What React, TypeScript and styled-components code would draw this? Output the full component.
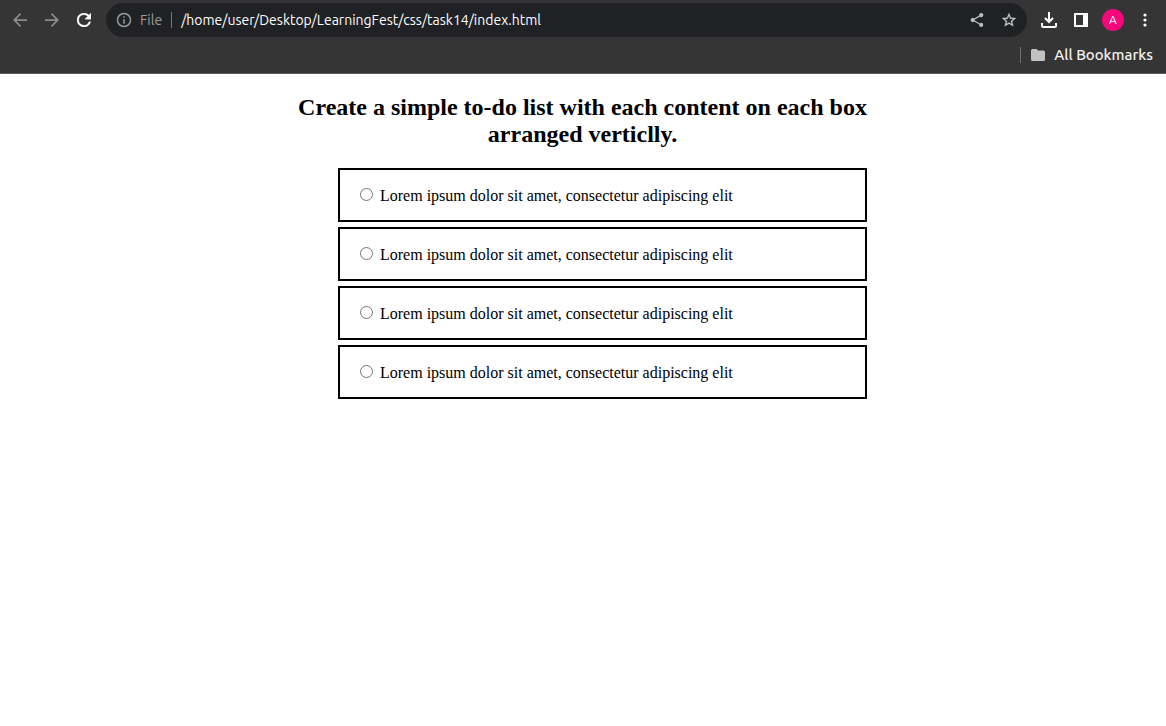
import React from "react";
import styled, { createGlobalStyle } from "styled-components";

const GlobalStyle = createGlobalStyle`
  * { box-sizing: border-box; }
  body {
    margin: 0;
    background: #fff;
    color: #000;
    font-family: "Liberation Serif", "Times New Roman", serif;
    font-size: 16px;
  }
`;

const Chrome = styled.header`
  background: #353535;
  border-bottom: 1px solid #5c5c5c;
  font-family: Ubuntu, "Noto Sans", sans-serif;
  font-size: 14px;
  color: #fff;
`;

const Toolbar = styled.div`
  display: flex;
  align-items: center;
  height: 40px;
  padding: 0 5px 0 4px;
`;

const IconButton = styled.button<{ $color?: string }>`
  display: flex;
  flex: none;
  align-items: center;
  justify-content: center;
  width: 32px;
  height: 32px;
  padding: 0;
  border: 0;
  background: none;
  color: ${({ $color }) => $color ?? "#fff"};
`;

const AddressBar = styled.div`
  display: flex;
  flex: 1;
  align-items: center;
  min-width: 0;
  height: 34px;
  margin: 0 6px;
  padding: 0 2px 0 10px;
  border-radius: 17px;
  background: #202124;
`;

const SiteInfo = styled.button`
  display: flex;
  align-items: center;
  gap: 8px;
  height: 16px;
  padding: 0 9px 0 0;
  border: 0;
  border-right: 1px solid #77787a;
  background: none;
  color: #9a9b9d;
  font: inherit;
`;

const Url = styled.input`
  flex: 1;
  min-width: 0;
  height: 24px;
  padding: 0 9px;
  border: 0;
  outline: 0;
  background: none;
  color: #fff;
  font: inherit;
`;

const Avatar = styled.span`
  width: 22px;
  height: 22px;
  border-radius: 50%;
  background: #f8067c;
  font-family: Ubuntu, "Noto Sans", sans-serif;
  font-size: 12px;
  line-height: 22px;
  text-align: center;
`;

const BookmarksBar = styled.div`
  display: flex;
  align-items: center;
  justify-content: flex-end;
  height: 33px;
  padding: 0 13px 4px 0;
`;

const BookmarksButton = styled.button`
  display: flex;
  align-items: center;
  gap: 9px;
  height: 16px;
  padding: 0 0 0 10px;
  border: 0;
  border-left: 1px solid #6f6f6f;
  background: none;
  color: #f1f1f1;
  font: inherit;
  font-size: 15px;
  font-weight: 500;
`;

const Main = styled.main`
  width: 100%;
  max-width: 570px;
  margin: 0 auto;
  padding-right: 1px;
`;

const Title = styled.h2`
  margin: 20px 0;
  font-size: 24px;
  line-height: 27px;
  text-align: center;
`;

const TodoList = styled.ul`
  display: flex;
  flex-direction: column;
  gap: 5px;
  margin: 0;
  padding: 0 0 0 40px;
  list-style: none;
`;

const TodoItem = styled.li`
  padding: 17px 20px 15px;
  border: 2px solid #000;
`;

const TodoLabel = styled.label`
  display: flex;
  align-items: center;
  gap: 7px;
  line-height: 18px;
`;

const Radio = styled.input`
  width: 13px;
  height: 13px;
  margin: 0 0 4px;
`;

const Icon = ({ d, box, w, h = w }: { d: string; box: string; w: number; h?: number }) => (
  <svg width={w} height={h} viewBox={box} fill="currentColor" aria-hidden="true">
    <path d={d} />
  </svg>
);

const paths = {
  back: "M20 11H7.83l5.59-5.59L12 4l-8 8 8 8 1.41-1.41L7.83 13H20v-2z",
  forward: "M12 4l-1.41 1.41L16.17 11H4v2h12.17l-5.58 5.59L12 20l8-8z",
  reload:
    "M17.65 6.35A7.96 7.96 0 0 0 12 4a8 8 0 1 0 7.73 10h-2.08A6 6 0 1 1 12 6c1.66 0 3.14.69 4.22 1.78L13 11h7V4l-2.35 2.35z",
  info: "M11 7h2v2h-2zm0 4h2v6h-2zm1-9a10 10 0 1 0 0 20 10 10 0 0 0 0-20zm0 18a8 8 0 1 1 0-16 8 8 0 0 1 0 16z",
  share:
    "M18 16.08c-.76 0-1.44.3-1.96.77L8.91 12.7a3.3 3.3 0 0 0 0-1.4l7.05-4.11A3 3 0 1 0 15 5c0 .24.04.47.09.7L8.04 9.81a3 3 0 1 0 0 4.38l7.12 4.16c-.05.21-.08.43-.08.65a2.92 2.92 0 1 0 2.92-2.92z",
  star: "M22 9.24l-7.19-.62L12 2 9.19 8.63 2 9.24l5.46 4.73L5.82 21 12 17.27 18.18 21l-1.63-7.03L22 9.24zM12 15.4l-3.76 2.27 1-4.28-3.32-2.88 4.38-.38L12 6.1l1.71 4.04 4.38.38-3.32 2.88 1 4.28L12 15.4z",
  folder: "M10 4H4a2 2 0 0 0-2 2v12a2 2 0 0 0 2 2h16a2 2 0 0 0 2-2V8a2 2 0 0 0-2-2h-8l-2-2z",
};

const DownloadIcon = () => (
  <svg width="16" height="16" viewBox="0 0 16 16" fill="none" stroke="currentColor" strokeWidth="2" aria-hidden="true">
    <path d="M8 0v10M4 6l4 4 4-4M1 11v3q0 1 1 1h12q1 0 1-1v-3" />
  </svg>
);

const SidePanelIcon = () => (
  <svg width="14" height="14" viewBox="0 0 14 14" fill="currentColor" aria-hidden="true">
    <path fillRule="evenodd" d="M0 0h14v14H0zM2 2v10h7V2z" />
  </svg>
);

const MenuIcon = () => (
  <svg width="4" height="14" viewBox="0 0 4 14" fill="currentColor" aria-hidden="true">
    <circle cx="2" cy="2" r="1.6" />
    <circle cx="2" cy="7" r="1.6" />
    <circle cx="2" cy="12" r="1.6" />
  </svg>
);

const todos = Array.from({ length: 4 }, () => "Lorem ipsum dolor sit amet, consectetur adipiscing elit");

export default function App() {
  return (
    <>
      <GlobalStyle />
      <Chrome>
        <Toolbar>
          <IconButton $color="#8b8b8b" aria-label="Back">
            <Icon d={paths.back} box="4 4 16 16" w={14} />
          </IconButton>
          <IconButton $color="#8b8b8b" aria-label="Forward">
            <Icon d={paths.forward} box="4 4 16 16" w={14} />
          </IconButton>
          <IconButton aria-label="Reload">
            <svg width="14" height="14" viewBox="4 4 16 16" fill="currentColor" stroke="currentColor" strokeWidth="0.4" aria-hidden="true">
              <path d={paths.reload} />
            </svg>
          </IconButton>
          <AddressBar>
            <SiteInfo>
              <Icon d={paths.info} box="1 1 22 22" w={16} />
              File
            </SiteInfo>
            <Url aria-label="Address" defaultValue="/home/user/Desktop/LearningFest/css/task14/index.html" />
            <IconButton $color="#bdbdbd" aria-label="Share">
              <Icon d={paths.share} box="3 2 18 20" w={14} />
            </IconButton>
            <IconButton $color="#c7c7c7" aria-label="Bookmark this page">
              <svg width="14" height="14" viewBox="2 2 20 20" fill="currentColor" stroke="currentColor" strokeWidth="0.4" aria-hidden="true">
                <path d={paths.star} />
              </svg>
            </IconButton>
          </AddressBar>
          <IconButton aria-label="Downloads">
            <DownloadIcon />
          </IconButton>
          <IconButton aria-label="Side panel">
            <SidePanelIcon />
          </IconButton>
          <IconButton aria-label="Profile">
            <Avatar>A</Avatar>
          </IconButton>
          <IconButton aria-label="Menu">
            <MenuIcon />
          </IconButton>
        </Toolbar>
        <BookmarksBar>
          <BookmarksButton>
            <svg width="14" height="12" viewBox="2 4 20 16" preserveAspectRatio="none" fill="#c2c2c2" aria-hidden="true">
              <path d={paths.folder} />
            </svg>
            All Bookmarks
          </BookmarksButton>
        </BookmarksBar>
      </Chrome>
      <Main>
        <Title>Create a simple to-do list with each content on each box arranged verticlly.</Title>
        <TodoList>
          {todos.map((text, i) => (
            <TodoItem key={i}>
              <TodoLabel>
                <Radio type="radio" name={`todo-${i}`} />
                {text}
              </TodoLabel>
            </TodoItem>
          ))}
        </TodoList>
      </Main>
    </>
  );
}
